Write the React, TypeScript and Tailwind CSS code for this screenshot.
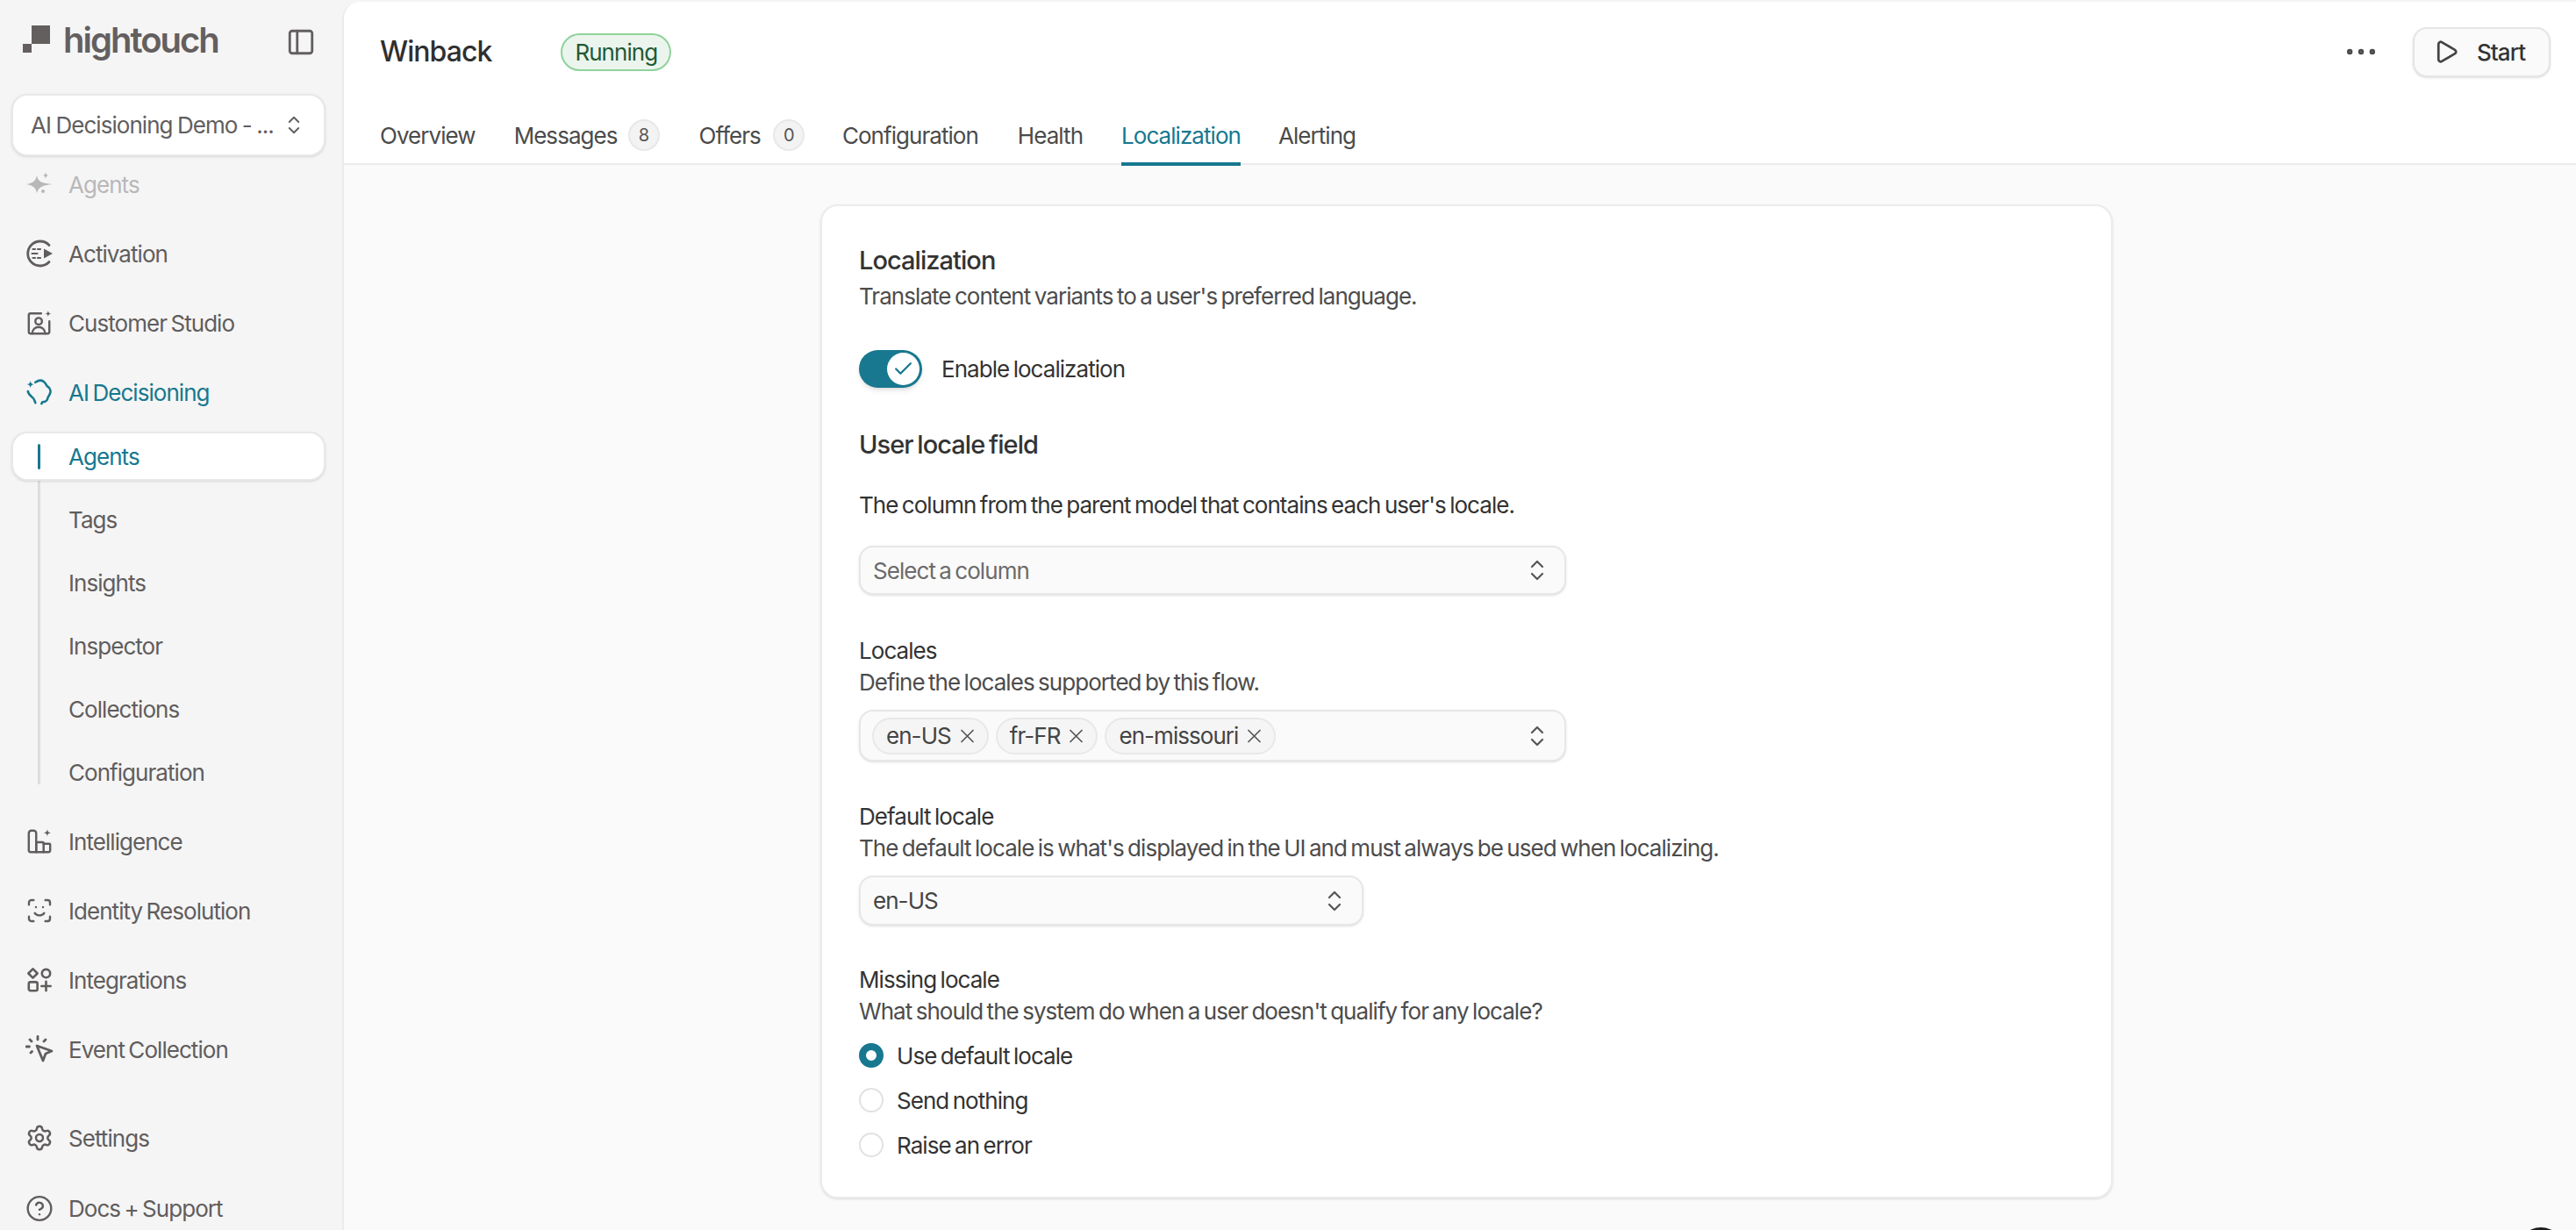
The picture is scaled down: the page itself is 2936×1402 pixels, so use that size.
import { Check, CircleHelp, Ellipsis, PanelLeft, Play, ScanFace, Settings } from "lucide-react";
import type { ReactNode } from "react";

const TEAL = "text-[#17788f]";

function Chevrons({ className }: { className: string }) {
  return (
    <svg viewBox="0 0 16 24" className={className} fill="none" stroke="currentColor" strokeWidth="2.200" strokeLinecap="round" strokeLinejoin="round">
      <path d="M2 8l6-6 6 6M2 16l6 6 6-6" />
    </svg>
  );
}

function SparkIcon() {
  return (
    <svg viewBox="0 0 32 32" className="w-[32px] h-[32px]" fill="currentColor">
      <path d="M13 6c1 6 4 9 18 10-13 1-16 4-18 10-1-6-5-9-12-10 7-1 11-4 12-10z" />
      <path d="M23 2c.4 2.500 1 3.500 3 4-2 .5-2.600 1.500-3 4-.4-2.500-1-3.500-3-4 2-.5 2.600-1.500 3-4z" />
      <circle cx="20" cy="24" r="2" />
    </svg>
  );
}

function ActivationIcon() {
  return (
    <svg viewBox="0 0 32 32" className="w-[32px] h-[32px]" fill="none" stroke="currentColor" strokeWidth="2.800" strokeLinecap="round">
      <path d="M27 6.500A14 14 0 1 0 27 25.500" />
      <path d="M8.500 11h2.500M14 11h3M7.500 16h6M8.500 21h2.500M14 21h3" strokeWidth="2.200" />
      <path d="M21 10.500l10 5.500-10 5.500z" fill="currentColor" stroke="none" />
    </svg>
  );
}

function StudioIcon() {
  return (
    <svg viewBox="0 0 32 32" className="w-[30px] h-[30px]" fill="none" stroke="currentColor" strokeWidth="2.600" strokeLinecap="round" strokeLinejoin="round">
      <path d="M18 4.500H5a2 2 0 0 0-2 2V27a2 2 0 0 0 2 2h21a2 2 0 0 0 2-2V14" />
      <circle cx="15" cy="14" r="4" />
      <path d="M7 29c.6-5 4-8 8-8s7.400 3 8 8" />
      <path d="M26.500 1c.4 2.700 1 3.300 3.800 3.800-2.800.5-3.400 1.100-3.800 3.800-.4-2.700-1-3.300-3.800-3.800 2.800-.5 3.400-1.100 3.800-3.800z" fill="currentColor" stroke="none" />
    </svg>
  );
}

function DecisioningIcon() {
  return (
    <svg viewBox="0 0 32 32" className="w-[30px] h-[30px]" fill="none" stroke="currentColor" strokeWidth="2.800" strokeLinecap="round" strokeLinejoin="round">
      <path d="M11 4c3-2 7-3 10-1 2 1 3 4 4.500 6 3 1.500 4.500 5 3.500 8-.5 2-2 4-3 6 0 3-3 5-6.500 5l-1 2" />
      <path d="M2 15c0 3 3 5 5 7 2 1 3 4 4 7" />
      <path d="M5 2c.5 3 1.500 4 4.500 4.500C6.500 7 5.500 8 5 11c-.5-3-1.500-4-4.500-4.500C3.500 6 4.500 5 5 2z" fill="currentColor" stroke="none" />
    </svg>
  );
}

function IntelligenceIcon() {
  return (
    <svg viewBox="0 0 32 32" className="w-[30px] h-[30px]" fill="none" stroke="currentColor" strokeWidth="2.600" strokeLinecap="round" strokeLinejoin="round">
      <path d="M3 27V6a3 3 0 0 1 3-3h3a3 3 0 0 1 3 3v23H5a2 2 0 0 1-2-2z" />
      <path d="M12 29V17h8a1 1 0 0 1 1 1v11z" />
      <path d="M21 19h7a1 1 0 0 1 1 1v7a2 2 0 0 1-2 2h-6" />
      <path d="M25.500 1c.4 3 1.300 4 4.500 4.500-3.200.5-4.100 1.500-4.500 4.500-.4-3-1.300-4-4.500-4.500 3.200-.5 4.100-1.500 4.500-4.500z" fill="currentColor" stroke="none" />
    </svg>
  );
}

function IntegrationsIcon() {
  return (
    <svg viewBox="0 0 32 32" className="w-[30px] h-[30px]" fill="none" stroke="currentColor" strokeWidth="2.800" strokeLinecap="round" strokeLinejoin="round">
      <path d="M8 2.500l5.500 5.500L8 13.500 2.500 8z" />
      <circle cx="24" cy="8" r="5" />
      <rect x="3" y="18.500" width="10.500" height="10.500" rx="2" />
      <path d="M24 18v11M18.500 23.500h11" />
    </svg>
  );
}

function EventIcon() {
  return (
    <svg viewBox="0 0 32 32" className="w-[32px] h-[32px]" fill="none" stroke="currentColor" strokeWidth="2.800" strokeLinecap="round" strokeLinejoin="round">
      <path d="M13 12l17 6-7 3-3 8z" />
      <path d="M14 1.500v3.500M5 5l2 2M23 5l-2 2M1 13h3.500M6 20l1.500-1.500" />
    </svg>
  );
}

function NavItem({ icon, label, color = "text-[#615d5d]", extra = "" }: { icon: ReactNode; label: string; color?: string; extra?: string }) {
  return (
    <div className={`h-[56px] flex items-center shrink-0 pl-[16px] ${color} ${extra}`}>
      <span className="w-[32px] h-[32px] flex items-center justify-center mr-[17px]">{icon}</span>
      <span className="text-[26px]">{label}</span>
    </div>
  );
}

function Sidebar() {
  const sub = ["Tags", "Insights", "Inspector", "Collections", "Configuration"];
  return (
    <aside className="w-[390px] shrink-0 h-full flex flex-col pl-[13px] pr-[19px] overflow-hidden">
      <div className="h-[107px] shrink-0 flex items-start text-[#645f5f] pl-[13px]">
        <svg viewBox="0 0 31 31" className="w-[31px] h-[31px] mt-[29px] mr-[15px]" fill="currentColor">
          <path d="M10 0h21v21H10zM0 21h10v10H0z" />
        </svg>
        <span className="text-[40px] leading-[44px] mt-[24px] font-semibold tracking-[-2px]">hightouch</span>
        <PanelLeft className="w-[34px] h-[34px] mt-[31px] ml-auto mr-[11px]" strokeWidth={2} />
      </div>
      <div className="h-[71px] shrink-0 rounded-[18px] bg-white border-2 border-[#e8e8e8] shadow-sm flex items-center pl-[20px] text-[#625e5e]">
        <span className="text-[26px] whitespace-nowrap [word-spacing:-1px]">AI Decisioning Demo - ...</span>
        <Chevrons className="w-[14px] h-[21px] ml-auto mr-[27px]" />
      </div>
      <div className="flex flex-col mt-[4px]">
        <NavItem icon={<SparkIcon />} label="Agents" extra="opacity-40" />
        <NavItem icon={<ActivationIcon />} label="Activation" extra="mt-[23px]" />
        <NavItem icon={<StudioIcon />} label="Customer Studio" extra="mt-[23px]" />
        <NavItem icon={<DecisioningIcon />} label="AI Decisioning" color={TEAL} extra="mt-[23px]" />
        <div className="relative flex flex-col mt-[17px]">
          <div className="absolute left-[30px] top-[56px] h-[346px] w-[3px] bg-[#dedede]" />
          <div className="relative h-[56px] rounded-[18px] bg-white border-2 border-[#e8e8e8] shadow-sm flex items-center">
            <div className="absolute left-[28px] top-[12px] h-[29px] w-[3px] rounded-full bg-[#17788f]" />
            <span className={`text-[26px] ml-[63px] ${TEAL}`}>Agents</span>
          </div>
          {sub.map((s) => (
            <div key={s} className="h-[56px] mt-[16px] flex items-center pl-[65px] text-[26px] text-[#615d5d]">
              {s}
            </div>
          ))}
        </div>
        <NavItem icon={<IntelligenceIcon />} label="Intelligence" extra="mt-[23px]" />
        <NavItem icon={<ScanFace className="w-[32px] h-[32px]" strokeWidth={1.800} />} label="Identity Resolution" extra="mt-[23px]" />
        <NavItem icon={<IntegrationsIcon />} label="Integrations" extra="mt-[23px]" />
        <NavItem icon={<EventIcon />} label="Event Collection" extra="mt-[23px]" />
        <NavItem icon={<Settings className="w-[32px] h-[32px]" strokeWidth={1.900} />} label="Settings" extra="mt-[45px]" />
        <NavItem icon={<CircleHelp className="w-[33px] h-[33px]" strokeWidth={1.800} />} label="Docs + Support" extra="mt-[24px]" />
      </div>
    </aside>
  );
}

function Count({ n, gap }: { n: number; gap: string }) {
  return (
    <span className={`${gap} w-[36px] h-[36px] rounded-full bg-[#f3f3f3] border-2 border-[#e8e8e8] flex items-center justify-center text-[20px] text-[#555]`}>
      {n}
    </span>
  );
}

function Header() {
  return (
    <header className="h-[186px] shrink-0 bg-white border-b-2 border-[#ebebeb] flex flex-col pl-[41px] pr-[29px]">
      <div className="h-[110px] shrink-0 flex items-center pt-[4px]">
        <span className="text-[32px] font-medium text-[#2f2f2f]">Winback</span>
        <span className="ml-[79px] h-[43px] px-[14px] rounded-full bg-[#ebf5ee] border-2 border-[#8fd29b] flex items-center text-[26px] text-[#1f5a33]">
          Running
        </span>
        <Ellipsis className="ml-auto w-[44px] h-[44px] text-[#4a4a4a]" strokeWidth={1.500} />
        <button className="ml-[37px] w-[157px] h-[57px] rounded-[16px] bg-[#fafafa] border-2 border-[#e5e5e5] shadow-sm flex items-center pl-[21px] text-[26px] font-medium text-[#333]">
          <Play className="w-[30px] h-[30px] mr-[20px] text-[#444]" strokeWidth={2.200} />
          Start
        </button>
      </div>
      <div className="flex items-stretch h-[74px] pt-[10px] text-[26px] text-[#4b4b4b]">
        <div className="flex items-center">Overview</div>
        <div className="flex items-center ml-[44px]">
          Messages
          <Count n={8} gap="ml-[12px]" />
        </div>
        <div className="flex items-center ml-[45px]">
          Offers
          <Count n={0} gap="ml-[14px]" />
        </div>
        <div className="flex items-center ml-[43px]">Configuration</div>
        <div className="flex items-center ml-[45px]">Health</div>
        <div className={`relative flex items-center ml-[44px] ${TEAL}`}>
          Localization
          <span className="absolute left-0 right-0 bottom-[-3px] h-[4px] bg-[#17788f]" />
        </div>
        <div className="flex items-center ml-[43px]">Alerting</div>
      </div>
    </header>
  );
}

function SelectBox({ className, children }: { className: string; children: ReactNode }) {
  return (
    <div className={`rounded-[16px] bg-[#fafafa] border-2 border-[#e7e7e7] shadow-sm flex items-center ${className}`}>
      {children}
      <Chevrons className="ml-auto mr-[23px] w-[16px] h-[24px] text-[#555]" />
    </div>
  );
}

function Chip({ label }: { label: string }) {
  return (
    <span className="h-[42px] pl-[14px] pr-[14px] rounded-full bg-[#f5f5f5] border-2 border-[#e8e8e8] flex items-center gap-[10px] text-[26px] text-[#444]">
      {label}
      <svg viewBox="0 0 16 16" className="w-[17px] h-[16px] text-[#555]" fill="none" stroke="currentColor" strokeWidth="1.700" strokeLinecap="round">
        <path d="M1.500 1.500l13 13M14.500 1.500l-13 13" />
      </svg>
    </span>
  );
}

function Radio({ label, checked }: { label: string; checked?: boolean }) {
  return (
    <div className="h-[36px] flex items-center">
      <span
        className={
          checked
            ? "w-[28px] h-[28px] rounded-full border-[8px] border-[#17788f] bg-white"
            : "w-[28px] h-[28px] rounded-full border-2 border-[#e2e2e2] bg-white"
        }
      />
      <span className="ml-[15px] text-[26px] text-[#333]">{label}</span>
    </div>
  );
}

function Card() {
  const title = "text-[26px] leading-[36px] text-[#333]";
  const desc = "text-[26px] leading-[36px] text-[#4c4c4c]";
  return (
    <section className="ml-[543px] mt-[45px] w-[1473px] rounded-[20px] bg-white border-2 border-[#ececec] shadow-sm pl-[42px] pt-[44px] pb-[41px]">
      <h2 className="text-[29px] leading-[36px] font-medium text-[#333]">Localization</h2>
      <p className={`${desc} mt-[5px]`}>Translate content variants to a user's preferred language.</p>
      <div className="mt-[43px] flex items-center h-[43px]">
        <span className="w-[72px] h-[43px] rounded-full bg-[#17788f] flex items-center justify-end pr-[3px] shadow-md">
          <span className="w-[37px] h-[37px] rounded-full bg-white flex items-center justify-center">
            <Check className="w-[25px] h-[25px] text-[#17788f]" strokeWidth={2.200} />
          </span>
        </span>
        <span className="ml-[22px] text-[26px] text-[#333]">Enable localization</span>
      </div>
      <h3 className="mt-[47px] text-[29px] leading-[36px] font-medium text-[#333]">User locale field</h3>
      <p className="mt-[33px] text-[26px] leading-[36px] text-[#333]">The column from the parent model that contains each user's locale.</p>
      <SelectBox className="mt-[28px] w-[806px] h-[56px] pl-[14px]">
        <span className="text-[26px] text-[#6b6b6b]">Select a column</span>
      </SelectBox>
      <div className={`${title} mt-[46px]`}>Locales</div>
      <p className={desc}>Define the locales supported by this flow.</p>
      <SelectBox className="mt-[13px] w-[806px] h-[59px] pl-[13px] gap-[8px]">
        <Chip label="en-US" />
        <Chip label="fr-FR" />
        <Chip label="en-missouri" />
      </SelectBox>
      <div className={`${title} mt-[45px]`}>Default locale</div>
      <p className={desc}>The default locale is what's displayed in the UI and must always be used when localizing.</p>
      <SelectBox className="mt-[13px] w-[575px] h-[57px] pl-[14px]">
        <span className="text-[26px] text-[#444]">en-US</span>
      </SelectBox>
      <div className={`${title} mt-[44px]`}>Missing locale</div>
      <p className={desc}>What should the system do when a user doesn't qualify for any locale?</p>
      <div className="mt-[14px] flex flex-col gap-[15px]">
        <Radio label="Use default locale" checked />
        <Radio label="Send nothing" />
        <Radio label="Raise an error" />
      </div>
    </section>
  );
}

export default function App() {
  return (
    <div className="relative w-[2936px] h-[1402px] overflow-hidden bg-[#f5f5f5] flex font-['Inter',sans-serif] tracking-[-0.95px] [word-spacing:-2px]">
      <Sidebar />
      <main className="flex-1 mt-[2px] rounded-tl-[20px] border-l-2 border-[#ebebeb] bg-[#fafafa] overflow-hidden flex flex-col">
        <Header />
        <div className="flex-1">
          <Card />
        </div>
      </main>
      <div className="absolute left-[2868px] top-[1399px] w-[56px] h-[56px] rounded-full bg-[#1c1c1c]" />
    </div>
  );
}
